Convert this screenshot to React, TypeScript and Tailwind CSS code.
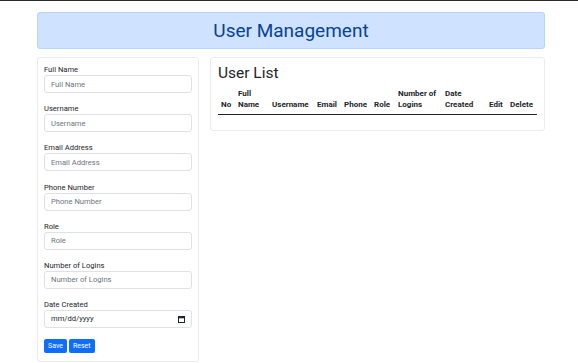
import React from "react";

const fields = [
  { label: "Full Name", type: "text" },
  { label: "Username", type: "text" },
  { label: "Email Address", type: "email" },
  { label: "Phone Number", type: "text" },
  { label: "Role", type: "text" },
  { label: "Number of Logins", type: "number" },
];

const columns = [
  { label: "No", w: "w-[17px]" },
  { label: "Full Name", w: "w-[34px]" },
  { label: "Username", w: "w-[45px]" },
  { label: "Email", w: "w-[27px]" },
  { label: "Phone", w: "w-[30px]" },
  { label: "Role", w: "w-[24px]" },
  { label: "Number of Logins", w: "w-[47px]" },
  { label: "Date Created", w: "w-[44px]" },
  { label: "Edit", w: "w-[21px]" },
  { label: "Delete", w: "w-[30px]" },
];

function CalendarIcon() {
  return (
    <svg width="7" height="7" viewBox="0 0 7 7" fill="none">
      <rect x="0.5" y="0.5" width="6" height="6" stroke="#212529" strokeWidth="1" />
      <rect x="0.5" y="0.5" width="6" height="1.8" fill="#212529" />
    </svg>
  );
}

export default function App() {
  return (
    <div className="min-h-[363px] bg-white font-['Roboto',sans-serif] text-[#212529]">
      <div className="h-px bg-[#2a2a2a]" />
      <div className="ml-[37px] mr-[33px] pt-[11px]">
        {/* Header */}
        <div className="flex h-[37px] items-center justify-center rounded-[3px] border border-[#b6d4fe] bg-[#cfe2ff]">
          <h1 className="text-[19px] leading-none text-[#084298]">User Management</h1>
        </div>

        <div className="mt-[8px] flex items-start gap-[11px]">
          {/* Form card */}
          <div className="w-[162px] rounded-[3px] border border-[#e9ecef] px-[6px] pb-[8px] pt-[6px]">
            <form onSubmit={(e) => e.preventDefault()}>
              {fields.map((f) => (
                <div key={f.label} className="mb-[10.2px]">
                  <label className="block text-[7.6px] leading-[11px]">{f.label}</label>
                  <input
                    type={f.type}
                    placeholder={f.label}
                    className="block h-[18px] w-full rounded-[3px] border border-[#dee2e6] px-[6px] text-[7.6px] outline-none placeholder:text-[#6c757d]"
                  />
                </div>
              ))}
              <div className="mb-[11px]">
                <label className="block text-[7.6px] leading-[11px]">Date Created</label>
                <div className="flex h-[18px] w-full items-center justify-between rounded-[3px] border border-[#dee2e6] pl-[6px] pr-[6px]">
                  <span className="text-[7.6px] leading-none">mm/dd/yyyy</span>
                  <CalendarIcon />
                </div>
              </div>
              <div className="flex gap-[2px]">
                <button className="h-[14px] rounded-[2px] bg-[#0d6efd] px-[4px] text-[7px] leading-none text-white">
                  Save
                </button>
                <button className="h-[14px] rounded-[2px] bg-[#0d6efd] px-[4px] text-[7px] leading-none text-white">
                  Reset
                </button>
              </div>
            </form>
          </div>

          {/* List card */}
          <div className="flex-1 rounded-[3px] border border-[#e9ecef] px-[7px] pb-[7px] pt-[5px]">
            <h2 className="text-[15.5px] leading-[20px]">User List</h2>
            <table className="mb-[8px] w-full table-fixed border-collapse">
              <thead>
                <tr className="border-b border-[#212529]">
                  {columns.map((c) => (
                    <th
                      key={c.label}
                      className={`${c.w} pb-[4px] pl-[3px] pt-[5px] text-left align-bottom text-[8px] font-bold leading-[11px]`}
                    >
                      {c.label}
                    </th>
                  ))}
                </tr>
              </thead>
              <tbody />
            </table>
          </div>
        </div>
      </div>
    </div>
  );
}
